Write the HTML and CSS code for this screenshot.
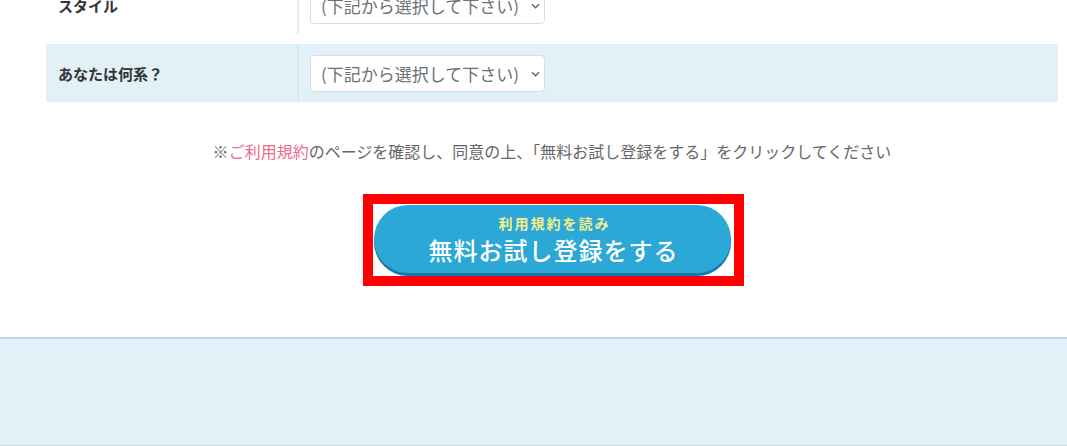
FILE: index.html
```html
<!DOCTYPE html>
<html lang="ja">
<head>
<meta charset="utf-8">
<title>登録フォーム</title>
<link rel="stylesheet" href="styles.css">
</head>
<body>
<main class="page">
  <div class="form-table">
    <div class="row row-white">
      <div class="label">スタイル</div>
      <div class="field">
        <span class="select-wrap">
          <select class="select"><option>(下記から選択して下さい)</option></select>
          <svg class="chev" width="9" height="6" viewBox="0 0 9 6"><path d="M1 1.2l3.5 3.5 3.5-3.5" fill="none" stroke="#666" stroke-width="1.4"/></svg>
        </span>
      </div>
    </div>
    <div class="row row-blue">
      <div class="label">あなたは何系？</div>
      <div class="field">
        <span class="select-wrap">
          <select class="select"><option>(下記から選択して下さい)</option></select>
          <svg class="chev" width="9" height="6" viewBox="0 0 9 6"><path d="M1 1.2l3.5 3.5 3.5-3.5" fill="none" stroke="#666" stroke-width="1.4"/></svg>
        </span>
      </div>
    </div>
  </div>
  <p class="notice">※<a class="terms" href="#">ご利用規約</a>のページを確認し、同意の上、「無料お試し登録をする」をクリックしてください</p>
  <div class="btn-area">
    <div class="highlight">
      <button class="submit" type="button">
        <span class="sub">利用規約を読み</span>
        <span class="main-label">無料お試し登録をする</span>
      </button>
    </div>
  </div>
</main>
<footer class="footer"></footer>
</body>
</html>
```

FILE: styles.css
```css
* { box-sizing: border-box; }
html, body {
  margin: 0;
  padding: 0;
  background: #fff;
  font-family: "Noto Sans CJK JP", "Noto Sans", sans-serif;
  color: #333;
}
body { height: 446px; overflow: hidden; }

.page {
  width: 1012px;
  margin-left: 46px;
}

.form-table {
  margin-top: -24px;
  display: flex;
  flex-direction: column;
  gap: 10px;
}

.row {
  display: grid;
  grid-template-columns: 253px 1fr;
  height: 58px;
}
.row-white { background: #fff; }
.row-blue { background: #e2f0f8; }

.label {
  display: flex;
  align-items: center;
  padding-left: 12px;
  font-size: 15px;
  font-weight: 700;
  color: #333;
  border-right: 2px solid #ececec;
}
.row-blue .label { border-right-color: #d8e8f0; }

.field {
  display: flex;
  align-items: center;
  padding-left: 11px;
}

.select-wrap {
  position: relative;
  display: inline-block;
}
.select {
  appearance: none;
  -webkit-appearance: none;
  width: 235px;
  height: 37px;
  border: 1px solid #dcdcdc;
  border-radius: 4px;
  background: #fff;
  color: #707070;
  font-family: "Noto Sans CJK JP", sans-serif;
  font-size: 17px;
  padding: 0 0 0 10px;
  line-height: 35px;
}
.chev {
  position: absolute;
  right: 5px;
  top: 16px;
  pointer-events: none;
}

.notice {
  margin: 37px 0 0;
  text-align: center;
  font-size: 16px;
  line-height: 24px;
  color: #666;
}
.terms {
  color: #ea6d8f;
  text-decoration: none;
}

.btn-area {
  display: flex;
  justify-content: center;
  margin-top: 31px;
  padding-left: 2px;
}
.highlight {
  border: 10px solid #ff0000;
  background: #fff;
  width: 381px;
  height: 92px;
  padding: 1px 2px 0 1px;
}
.submit {
  width: 357px;
  height: 68px;
  border: none;
  border-radius: 34px;
  background: #2ba8d6;
  box-shadow: 0 3px 0 #1678b3;
  display: flex;
  flex-direction: column;
  align-items: center;
  justify-content: center;
  gap: 3px;
  padding: 0 0 0 3px;
  cursor: pointer;
  font-family: "Noto Sans CJK JP", sans-serif;
}
.sub {
  font-size: 14px;
  line-height: 18px;
  font-weight: 700;
  letter-spacing: 2px;
  color: #f3ef8c;
  padding-left: 2px;
}
.main-label {
  font-size: 24px;
  line-height: 30px;
  font-weight: 500;
  letter-spacing: 1px;
  color: #fff;
}

.footer {
  margin-top: 51px;
  height: 109px;
  background: #e3f1f9;
  border-top: 2px solid #b3d8ec;
  border-bottom: 1px solid #d3dde3;
}
```
